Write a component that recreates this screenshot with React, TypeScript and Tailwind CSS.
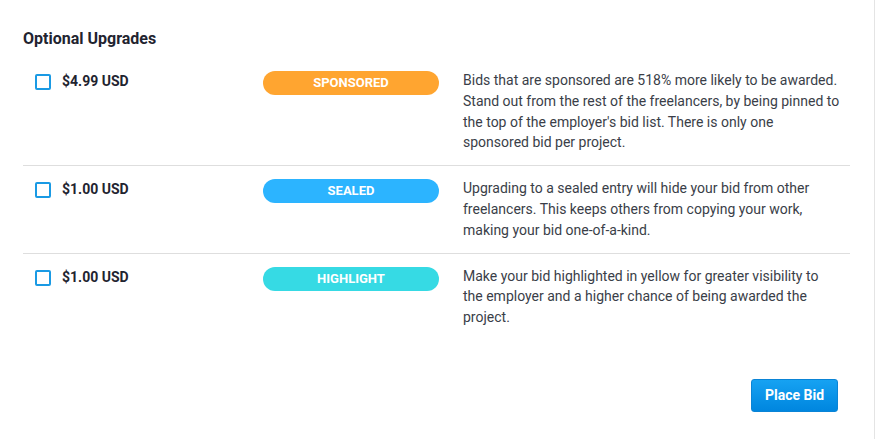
const upgrades = [
  {
    price: '$4.99 USD',
    label: 'SPONSORED',
    pill: 'bg-[#ffa530]',
    text: "Bids that are sponsored are 518% more likely to be awarded. Stand out from the rest of the freelancers, by being pinned to the top of the employer's bid list. There is only one sponsored bid per project.",
  },
  {
    price: '$1.00 USD',
    label: 'SEALED',
    pill: 'bg-[#2cb4ff]',
    text: 'Upgrading to a sealed entry will hide your bid from other freelancers. This keeps others from copying your work, making your bid one-of-a-kind.',
  },
  {
    price: '$1.00 USD',
    label: 'HIGHLIGHT',
    pill: 'bg-[#36dae4]',
    text: 'Make your bid highlighted in yellow for greater visibility to the employer and a higher chance of being awarded the project.',
  },
]

export default function App() {
  return (
    <div className="w-[876px] h-[439px] bg-white font-['Roboto',sans-serif] text-[#1f2430]">
      <div className="w-[875px] h-full border-r border-[#e4e4e4] pl-[23px] pr-[24px] pt-[29px]">
        <h2 className="text-[16px] leading-[20px] font-bold mb-[9px]">Optional Upgrades</h2>

        <div>
          {upgrades.map((u, i) => (
            <div
              key={u.label}
              className={`flex py-3 ${i < upgrades.length - 1 ? 'border-b border-[#dedede]' : ''}`}
            >
              <label className="flex items-start w-[240px] pl-3 pt-[4px] cursor-pointer">
                <span className="w-4 h-4 border-2 border-[#1a9ae4] rounded-[2px] mr-[11px] shrink-0" />
                <span className="text-[14px] leading-[15px] font-bold">{u.price}</span>
              </label>
              <div className="w-[200px] pt-[1px]">
                <div className={`${u.pill} w-[176px] h-[24px] rounded-full flex items-center justify-center text-white text-[13px] font-bold`}>
                  {u.label}
                </div>
              </div>
              <p className="w-[377px] text-[14px] leading-[20.8px] text-[#3a3e48]">{u.text}</p>
            </div>
          ))}
        </div>

        <div className="flex justify-end mt-[39px] pr-[12px]">
          <button className="w-[87px] h-[33px] rounded-[3px] bg-gradient-to-b from-[#16a2f2] to-[#0086df] border border-[#0a84d6] text-white text-[14px] font-bold">
            Place Bid
          </button>
        </div>
      </div>
    </div>
  )
}
